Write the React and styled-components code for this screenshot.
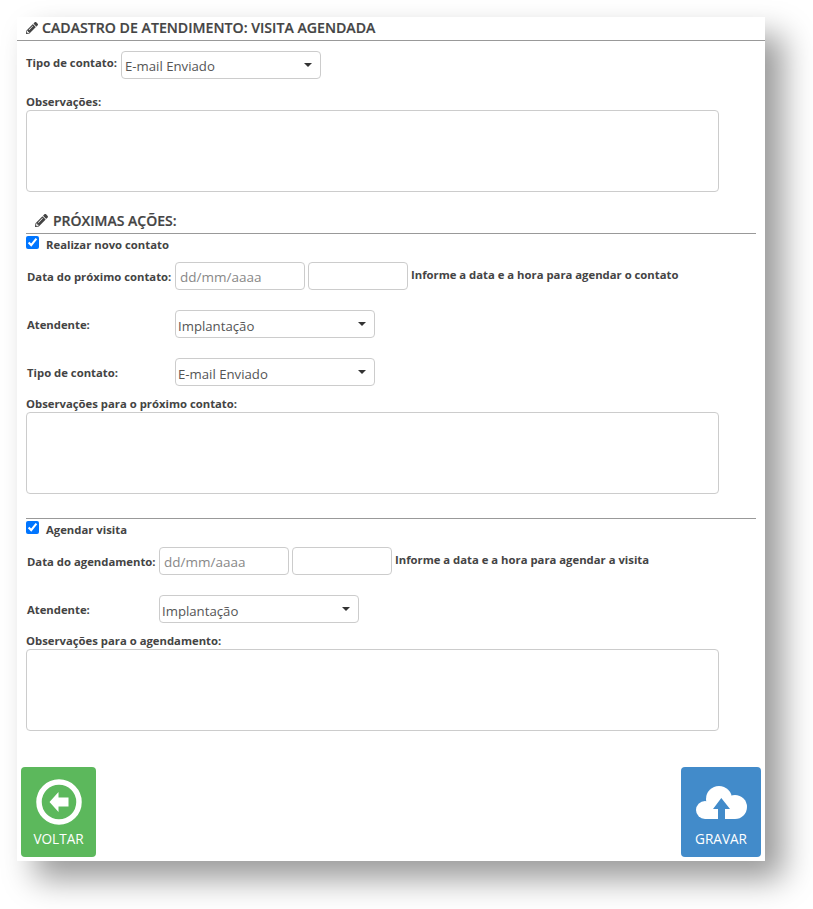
import styled, { createGlobalStyle } from "styled-components";
import { FaPencilAlt } from "react-icons/fa";

const GlobalStyle = createGlobalStyle`
  html, body { margin: 0; padding: 0; background: #fff; }
  body { font-family: "Open Sans", "Liberation Sans", sans-serif; color: #444; }
`;

const Page = styled.div`
  width: 813px;
  height: 909px;
  padding: 17px 0 0 17px;
  box-sizing: border-box;
  overflow: hidden;
`;

const Card = styled.div`
  width: 748px;
  height: 844px;
  background: #fff;
  box-shadow: 18px 18px 30px rgba(0, 0, 0, 0.4);
  display: flex;
  flex-direction: column;
`;

const Title = styled.h1`
  margin: 0;
  height: 24px;
  box-sizing: border-box;
  border-bottom: 1px solid #999;
  padding: 0 0 2px 9px;
  display: flex;
  align-items: center;
  gap: 4px;
  font-size: 14.15px;
  font-weight: 600;
  line-height: 21px;
  color: #444;
  -webkit-text-stroke: 0.2px #444;
`;

const Form = styled.form`
  padding: 10px 9px 0;
  display: flex;
  flex-direction: column;
`;

const Row = styled.div`
  display: flex;
  align-items: flex-start;
  gap: ${({ $gap }) => $gap ?? 3}px;
  margin-top: ${({ $top }) => $top ?? 0}px;
`;

const Label = styled.label`
  display: block;
  font-size: 11.3px;
  font-weight: 700;
  line-height: 16px;
  color: #444;
  flex: none;
  width: ${({ $width }) => ($width ? `${$width}px` : "auto")};
  margin-top: ${({ $top }) => $top ?? 0}px;
  margin-left: ${({ $left }) => $left ?? 0}px;
`;

const SelectWrap = styled.div`
  position: relative;
  width: 200px;
  height: 28px;
  flex: none;
  &::after {
    content: "";
    position: absolute;
    right: 9px;
    top: 12px;
    border-style: solid;
    border-width: 4px 4px 0;
    border-color: #333 transparent transparent;
  }
`;

const Select = styled.select`
  appearance: none;
  width: 100%;
  height: 100%;
  box-sizing: border-box;
  border: 1px solid #ccc;
  border-radius: 4px;
  background: #fff;
  padding: ${({ $first }) => ($first ? "2px 0 0 3px" : "4px 0 0 2px")};
  font-family: "Open Sans", "Liberation Sans", sans-serif;
  font-size: 13.2px;
  color: #555;
`;

const Input = styled.input`
  width: ${({ $width }) => $width}px;
  height: 28px;
  box-sizing: border-box;
  flex: none;
  border: 1px solid #ccc;
  border-radius: 4px;
  background: #fff;
  padding: 2px 4px 0;
  font-family: "Open Sans", "Liberation Sans", sans-serif;
  font-size: 13.5px;
  color: #555;
  &::placeholder { color: #888; opacity: 1; }
`;

const TextArea = styled.textarea`
  display: block;
  width: 693px;
  height: 82px;
  box-sizing: border-box;
  border: 1px solid #ccc;
  border-radius: 4px;
  background: #fff;
  resize: none;
  margin: 0;
`;

const SectionTitle = styled.h2`
  margin: 18px 0 0;
  width: 730px;
  height: 24px;
  box-sizing: border-box;
  border-bottom: 1px solid #999;
  padding: 0 0 2px 9px;
  display: flex;
  align-items: center;
  gap: 5px;
  font-size: 14px;
  font-weight: 600;
  line-height: 21px;
  color: #444;
  -webkit-text-stroke: 0.2px #444;
`;

const CheckRow = styled.label`
  display: flex;
  align-items: center;
  gap: 7px;
  height: 16px;
  margin: 2px 0 1px;
  font-size: 11.3px;
  font-weight: 700;
  color: #444;
`;

const Check = styled.input`
  width: 13px;
  height: 13px;
  margin: -3px 0 0;
  flex: none;
  accent-color: #0075ff;
`;

const Hint = styled.span`
  font-size: 11.3px;
  font-weight: 700;
  line-height: 16px;
  margin-top: 5px;
  color: #444;
`;

const Divider = styled.hr`
  width: 730px;
  height: 1px;
  border: 0;
  background: #999;
  margin: 24px 0 0;
`;

const Actions = styled.div`
  margin-top: auto;
  padding: 0 4px 4px;
  display: flex;
  justify-content: space-between;
`;

const ActionButton = styled.button`
  width: ${({ $width }) => $width}px;
  height: 90px;
  border: 0;
  border-radius: 4px;
  background: ${({ $color }) => $color};
  color: #fff;
  padding: 12px 0 0;
  display: flex;
  flex-direction: column;
  align-items: center;
  justify-content: flex-start;
  font-family: "Open Sans", "Liberation Sans", sans-serif;
  font-size: 13.6px;
  line-height: 20px;
  span { margin-top: 4px; }
`;

const IconBox = styled.div`
  height: 46px;
  display: flex;
  align-items: center;
  justify-content: center;
  svg { display: block; flex: none; }
`;

function BackIcon() {
  return (
    <svg width="46" height="46" viewBox="0 0 46 46">
      <circle cx="23" cy="23" r="20" fill="none" stroke="#fff" strokeWidth="5.5" />
      <polygon fill="#fff" points="13.5,23 22.5,13 22.5,18.5 32.5,18.5 32.5,27.5 22.5,27.5 22.5,33" />
    </svg>
  );
}

function CloudIcon({ color }) {
  return (
    <svg width="51" height="33" viewBox="0 0 51 33">
      <g fill="#fff">
        <circle cx="9" cy="24" r="9" />
        <circle cx="23" cy="13" r="13" />
        <circle cx="39" cy="21" r="12" />
        <rect x="9" y="18" width="30" height="15" />
      </g>
      <polygon fill={color} points="25.3,12 34,23 29,23 29,33 22,33 22,23 17,23" />
    </svg>
  );
}

function Dropdown({ value, first }) {
  return (
    <SelectWrap>
      <Select defaultValue={value} $first={first}>
        <option>{value}</option>
      </Select>
    </SelectWrap>
  );
}

export default function App() {
  return (
    <Page>
      <GlobalStyle />
      <Card>
        <Title>
          <FaPencilAlt size={12} color="#444" />
          CADASTRO DE ATENDIMENTO: VISITA AGENDADA
        </Title>
        <Form>
          <Row>
            <Label $top={4} $width={92}>Tipo de contato:</Label>
            <Dropdown value="E-mail Enviado" first />
          </Row>
          <Label $top={15}>Observações:</Label>
          <TextArea />

          <SectionTitle>
            <FaPencilAlt size={13} color="#444" />
            PRÓXIMAS AÇÕES:
          </SectionTitle>
          <CheckRow>
            <Check type="checkbox" defaultChecked />
            Realizar novo contato
          </CheckRow>
          <Row $top={9}>
            <Label $left={1} $top={7} $width={145}>Data do próximo contato:</Label>
            <Input $width={130} placeholder="dd/mm/aaaa" />
            <Input $width={100} />
            <Hint>Informe a data e a hora para agendar o contato</Hint>
          </Row>
          <Row $top={20} $gap={0}>
            <Label $left={1} $top={7} $width={148}>Atendente:</Label>
            <Dropdown value="Implantação" />
          </Row>
          <Row $top={20} $gap={0}>
            <Label $left={1} $top={7} $width={148}>Tipo de contato:</Label>
            <Dropdown value="E-mail Enviado" />
          </Row>
          <Label $top={10}>Observações para o próximo contato:</Label>
          <TextArea />

          <Divider />
          <CheckRow>
            <Check type="checkbox" defaultChecked />
            Agendar visita
          </CheckRow>
          <Row $top={9}>
            <Label $left={1} $top={7} $width={129}>Data do agendamento:</Label>
            <Input $width={130} placeholder="dd/mm/aaaa" />
            <Input $width={100} />
            <Hint>Informe a data e a hora para agendar a visita</Hint>
          </Row>
          <Row $top={20} $gap={0}>
            <Label $left={1} $top={7} $width={132}>Atendente:</Label>
            <Dropdown value="Implantação" />
          </Row>
          <Label $top={10}>Observações para o agendamento:</Label>
          <TextArea />
        </Form>
        <Actions>
          <ActionButton type="button" $width={75} $color="#5cb85c">
            <IconBox><BackIcon /></IconBox>
            <span>VOLTAR</span>
          </ActionButton>
          <ActionButton type="button" $width={80} $color="#428bca">
            <IconBox><CloudIcon color="#428bca" /></IconBox>
            <span>GRAVAR</span>
          </ActionButton>
        </Actions>
      </Card>
    </Page>
  );
}
